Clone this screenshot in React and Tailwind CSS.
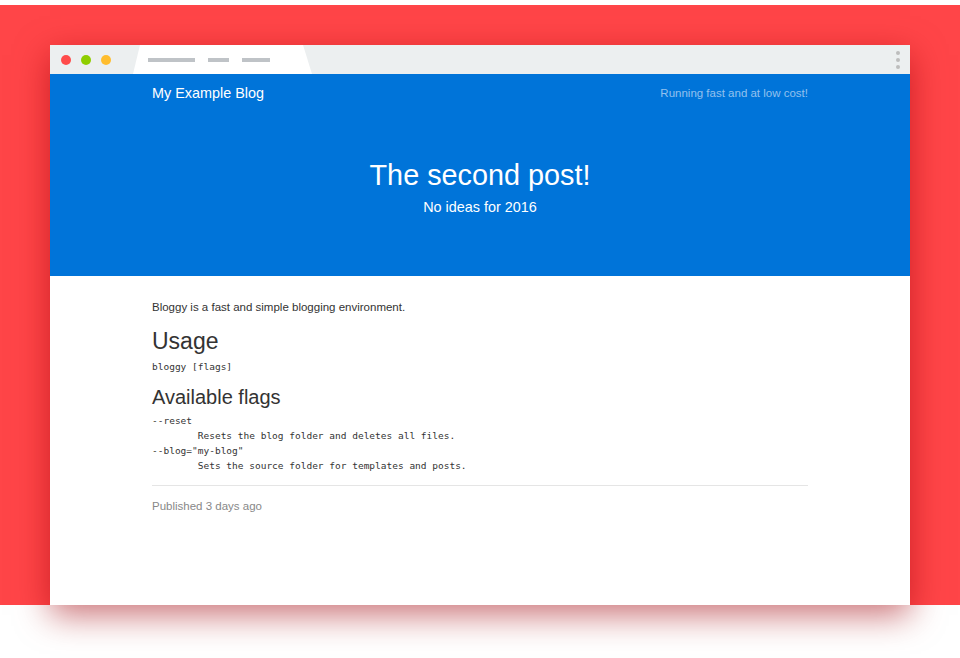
import React from "react";

const code = `--reset
\tResets the blog folder and deletes all files.
--blog="my-blog"
\tSets the source folder for templates and posts.`;

export default function App() {
  return (
    <div className="h-[658px] bg-white pt-[5px] overflow-hidden font-['Liberation_Sans',Arial,sans-serif]">
      {/* red backdrop */}
      <div className="h-[600px] bg-[#ff4548] px-[50px] pt-[40px]">
        {/* browser window */}
        <div className="h-[560px] bg-white flex flex-col shadow-[0_10px_32px_rgba(160,0,10,0.55)]">
          {/* toolbar */}
          <div className="h-[29px] bg-[#eceff0] flex items-center pl-[11px] pr-[10px] shrink-0">
            <div className="flex items-center gap-[10px]">
              <span className="w-[10px] h-[10px] rounded-full bg-[#ff4b4b]" />
              <span className="w-[10px] h-[10px] rounded-full bg-[#8fce00]" />
              <span className="w-[10px] h-[10px] rounded-full bg-[#ffbd2e]" />
            </div>
            <div className="ml-[22px] h-full w-[179px] bg-white flex items-center pl-[15px] gap-[13px] [clip-path:polygon(7px_0,170px_0,179px_100%,0_100%)]">
              <span className="w-[47px] h-[4px] bg-[#bfc3c7]" />
              <span className="w-[21px] h-[4px] bg-[#bfc3c7]" />
              <span className="w-[28px] h-[4px] bg-[#bfc3c7]" />
            </div>
            <div className="ml-auto flex flex-col gap-[3px]">
              <span className="w-[4px] h-[4px] rounded-full bg-[#bdbdbd]" />
              <span className="w-[4px] h-[4px] rounded-full bg-[#bdbdbd]" />
              <span className="w-[4px] h-[4px] rounded-full bg-[#bdbdbd]" />
            </div>
          </div>

          {/* blue header */}
          <div className="h-[202px] bg-[#0074d9] shrink-0 px-[102px] pt-[11px]">
            <div className="flex items-center justify-between h-[18px]">
              <span className="text-[14.4px] text-white">My Example Blog</span>
              <span className="text-[11.5px] text-[#93c1ee]">Running fast and at low cost!</span>
            </div>
            <h1 className="mt-[56px] text-center text-white text-[28.8px] leading-[32px]">The second post!</h1>
            <p className="mt-[7px] text-center text-white text-[14.4px] leading-[18px]">No ideas for 2016</p>
          </div>

          {/* content */}
          <div className="px-[102px] pt-[23px] text-[#333]">
            <p className="text-[11.5px] leading-[16px]">Bloggy is a fast and simple blogging environment.</p>
            <h2 className="mt-[13px] text-[23px] leading-[26px]">Usage</h2>
            <p className="mt-[6px] font-['DejaVu_Sans_Mono',monospace] text-[9.5px] leading-[14px]">bloggy [flags]</p>
            <h2 className="mt-[11px] text-[20px] leading-[24px]">Available flags</h2>
            <pre className="mt-[4px] font-['DejaVu_Sans_Mono',monospace] text-[9.5px] leading-[15px] whitespace-pre [tab-size:8]">{code}</pre>
            <hr className="mt-[12px] border-0 border-t border-[#e5e5e5]" />
            <p className="mt-[12px] text-[11.5px] leading-[16px] text-[#888]">Published 3 days ago</p>
          </div>
        </div>
      </div>
    </div>
  );
}
